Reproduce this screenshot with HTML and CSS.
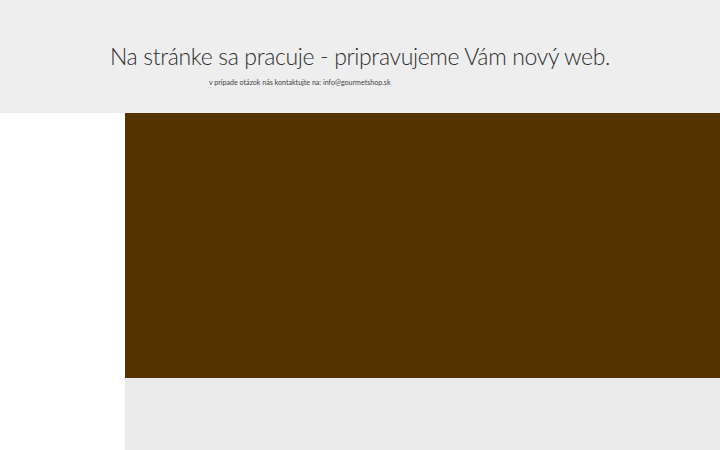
FILE: index.html
```html
<!DOCTYPE html>
<html lang="sk">
<head>
<meta charset="utf-8">
<title>Gourmetshop</title>
<link rel="stylesheet" href="styles.css">
</head>
<body>
<header class="top">
  <h1 class="title">Na stránke sa pracuje - pripravujeme Vám nový web.</h1>
  <p class="contact">v prípade otázok nás kontaktujte na: info@gourmetshop.sk</p>
</header>
<main class="main">
  <aside class="side"></aside>
  <section class="content">
    <div class="banner"></div>
    <div class="rest"></div>
  </section>
</main>
</body>
</html>
```

FILE: styles.css
```css
html, body {
  margin: 0;
  padding: 0;
  height: 100%;
}
body {
  font-family: Lato, "Open Sans", sans-serif;
  background: #ffffff;
  display: flex;
  flex-direction: column;
  overflow: hidden;
}
.top {
  background: #eeeeee;
  height: 113px;
  box-sizing: border-box;
  padding-top: 41px;
}
.title {
  margin: 0;
  text-align: center;
  font-weight: 300;
  font-size: 23px;
  line-height: 30px;
  color: #2e2e2e;
  letter-spacing: -0.35px;
}
.contact {
  margin: 7px 0 0 209px;
  font-size: 7.1px;
  line-height: 10px;
  color: #444444;
}
.main {
  flex: 1;
  display: flex;
}
.side {
  width: 125px;
  background: #ffffff;
}
.content {
  flex: 1;
  display: flex;
  flex-direction: column;
}
.banner {
  height: 265px;
  background: #553300;
}
.rest {
  flex: 1;
  background: #ebebeb;
}
```
